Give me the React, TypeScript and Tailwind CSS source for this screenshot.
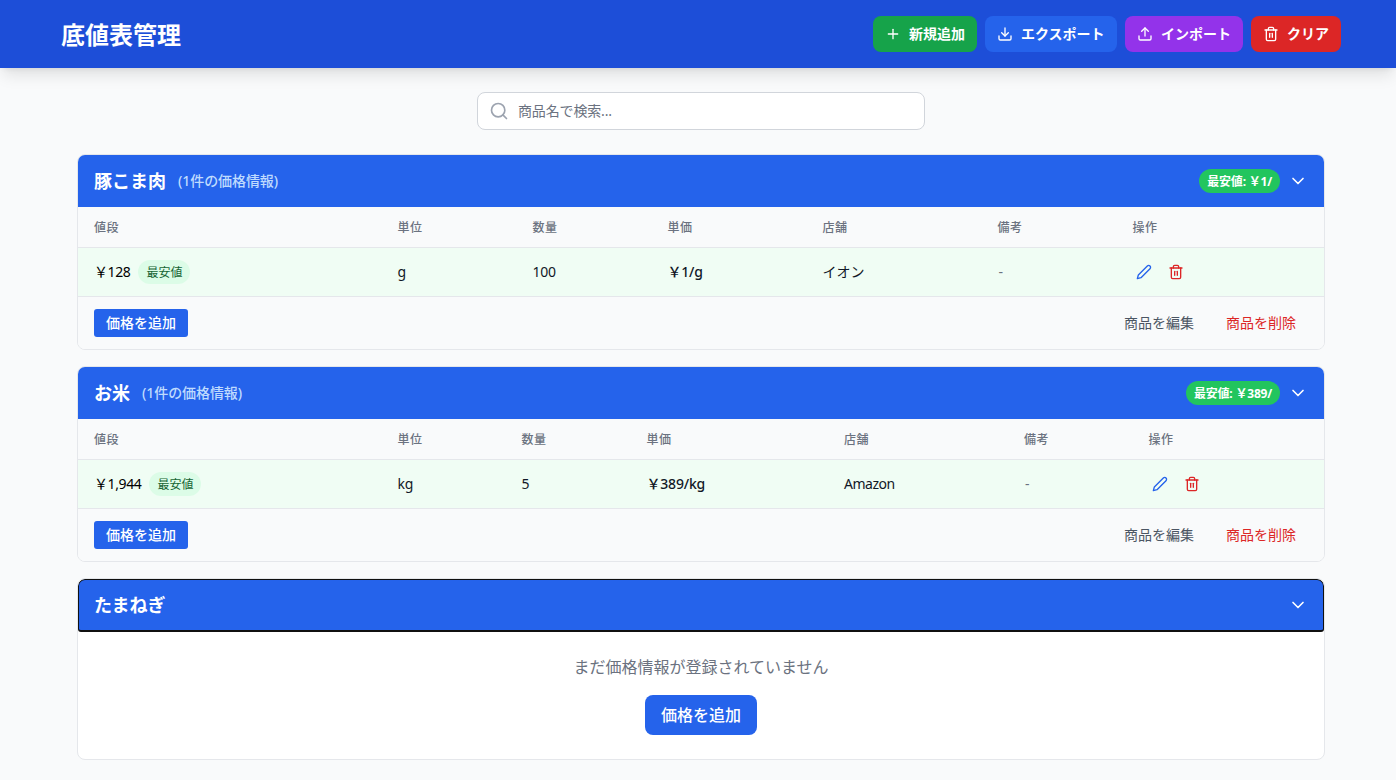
import { useState } from "react";
import type { IconType } from "react-icons";
import { FiChevronDown, FiDownload, FiEdit2, FiPlus, FiSearch, FiTrash2, FiUpload } from "react-icons/fi";

type Price = {
    price: string;
    unit: string;
    amount: string;
    unitPrice: string;
    store: string;
    note: string;
};

type Product = {
    name: string;
    lowest?: string;
    columns: string;
    prices: Price[];
};

const products: Product[] = [
    {
        name: "豚こま肉",
        lowest: "1",
        columns: "grid-cols-[303.5px_135px_135px_155px_175px_135px_1fr]",
        prices: [
            { price: "128", unit: "g", amount: "100", unitPrice: "1/g", store: "イオン", note: "-" },
        ],
    },
    {
        name: "お米",
        lowest: "389",
        columns: "grid-cols-[303.5px_124px_125px_197.5px_180px_124.5px_1fr]",
        prices: [
            { price: "1,944", unit: "kg", amount: "5", unitPrice: "389/kg", store: "Amazon", note: "-" },
        ],
    },
    { name: "たまねぎ", columns: "", prices: [] },
];

const headings = ["値段", "単位", "数量", "単価", "店舗", "備考", "操作"];

const headerButtons: { label: string; icon: IconType; color: string }[] = [
    { label: "新規追加", icon: FiPlus, color: "w-26 bg-[#16a34a]" },
    { label: "エクスポート", icon: FiDownload, color: "w-33 bg-[#2563eb]" },
    { label: "インポート", icon: FiUpload, color: "w-[118px] bg-[#9333ea]" },
    { label: "クリア", icon: FiTrash2, color: "w-[90px] bg-[#dc2626]" },
];

function ProductCard({ product, focused }: { product: Product; focused: boolean }) {
    const [open, setOpen] = useState(true);

    return (
        <div className="overflow-hidden rounded-lg border border-[#e5e7eb] bg-white">
            <button
                onClick={() => setOpen(!open)}
                className={`flex w-full items-center justify-between bg-[#2563eb] text-white ${
                    focused ? "h-[53px] rounded-[3px] rounded-t-[7px] border border-b-2 border-[#101010] px-[15px]" : "h-13 px-4"
                }`}
            >
                <div className="flex items-center gap-3">
                    <h2 className="text-lg font-bold">{product.name}</h2>
                    {product.prices.length > 0 && (
                        <span className="text-sm font-medium tracking-[-0.08px] text-[#bfdbfe]">({product.prices.length}件の価格情報)</span>
                    )}
                </div>
                <div className="flex items-center gap-2">
                    {product.lowest && (
                        <span className="rounded-full bg-[#22c55e] px-2 pt-[5px] pb-[3px] text-xs font-bold tracking-[-0.2px]">
                            最安値: ￥{product.lowest}/
                        </span>
                    )}
                    <FiChevronDown className="size-5" />
                </div>
            </button>

            {open && product.prices.length > 0 && (
                <div>
                    <div className={`grid h-10 items-center bg-[#f9fafb] px-4 pt-0.5 text-xs tracking-wider text-[#6b7280] ${product.columns}`}>
                        {headings.map((heading) => (
                            <span key={heading} className="font-medium">{heading}</span>
                        ))}
                    </div>
                    {product.prices.map((item) => (
                        <div
                            key={item.store}
                            className={`grid h-[49px] items-center border-t border-[#e5e7eb] bg-[#f0fdf4] px-4 text-sm text-[#111827] ${product.columns}`}
                        >
                            <div className="flex items-center gap-2">
                                <span className="tracking-[-0.4px] text-black">￥{item.price}</span>
                                <span className="rounded-full bg-[#dcfce7] px-2 pt-[5px] pb-[3px] text-xs text-[#166534]">最安値</span>
                            </div>
                            <span className="tracking-[-0.2px]">{item.unit}</span>
                            <span className="tracking-[-0.3px]">{item.amount}</span>
                            <span className="font-medium tracking-[-0.2px]">￥{item.unitPrice}</span>
                            <span className={item.store === "Amazon" ? "tracking-[-0.5px]" : ""}>{item.store}</span>
                            <span className="pl-px text-[#6b7280]">{item.note}</span>
                            <div className="flex gap-4 pl-[3px]">
                                <button className="text-[#2563eb]"><FiEdit2 className="size-4" /></button>
                                <button className="text-[#dc2626]"><FiTrash2 className="size-4" /></button>
                            </div>
                        </div>
                    ))}
                    <div className="flex h-[53px] items-center justify-between border-t border-[#e5e7eb] bg-[#f9fafb] px-4 text-sm">
                        <button className="rounded-[3px] bg-[#2563eb] px-3 py-1 font-medium text-white">価格を追加</button>
                        <div className="flex gap-2">
                            <button className="px-3 py-1 text-[#4b5563]">商品を編集</button>
                            <button className="px-3 py-1 text-[#dc2626]">商品を削除</button>
                        </div>
                    </div>
                </div>
            )}

            {open && product.prices.length === 0 && (
                <div className="flex h-[127px] flex-col items-center pt-[23px] text-[#6b7280]">
                    <p className="mb-4">まだ価格情報が登録されていません</p>
                    <button className="rounded-lg bg-[#2563eb] px-4 py-2 font-medium text-white">価格を追加</button>
                </div>
            )}
        </div>
    );
}

export default function App() {
    return (
        <div className="min-h-screen bg-[#f9fafb] font-['Noto_Sans','Noto_Sans_CJK_JP',sans-serif] text-[#111827]">
            <header className="flex h-17 items-center justify-between bg-[#1d4ed8] pr-[55px] pl-[61px] text-white shadow-[0_10px_15px_-3px_rgba(0,0,0,0.1),0_4px_6px_-4px_rgba(0,0,0,0.1)]">
                <h1 className="pt-0.5 text-2xl font-bold">底値表管理</h1>
                <div className="flex gap-2">
                    {headerButtons.map((button) => (
                        <button
                            key={button.label}
                            className={`flex h-9 items-center gap-2 rounded-lg px-3 text-sm font-semibold whitespace-nowrap ${button.color}`}
                        >
                            <button.icon className="size-4 shrink-0" />
                            {button.label}
                        </button>
                    ))}
                </div>
            </header>

            <main className="pt-6 pr-[71px] pl-[77px]">
                <div className="mx-auto flex h-[38px] w-112 items-center gap-[9px] rounded-lg border border-[#d1d5db] bg-white pl-[11px]">
                    <FiSearch className="size-5 shrink-0 text-[#9ca3af]" />
                    <input
                        type="text"
                        placeholder="商品名で検索..."
                        className="w-full bg-transparent text-sm tracking-[-0.15px] outline-none placeholder:text-[#6b7280]"
                    />
                </div>

                <div className="mt-6 space-y-4">
                    {products.map((product) => (
                        <ProductCard key={product.name} product={product} focused={product.prices.length === 0} />
                    ))}
                </div>
            </main>
        </div>
    );
}
